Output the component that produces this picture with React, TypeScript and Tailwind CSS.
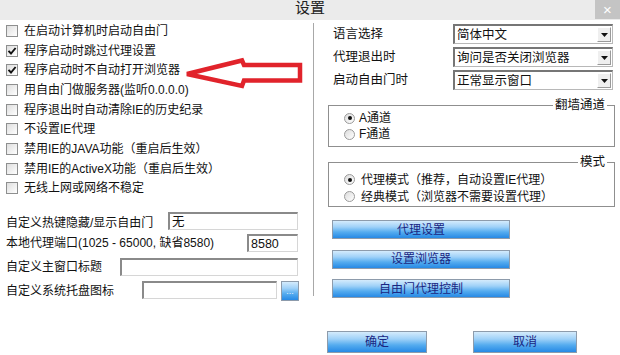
const checks = [
  { label: '在启动计算机时启动自由门', on: false },
  { label: '程序启动时跳过代理设置', on: true },
  { label: '程序启动时不自动打开浏览器', on: true },
  { label: '用自由门做服务器(监听0.0.0.0)', on: false },
  { label: '程序退出时自动清除IE的历史纪录', on: false },
  { label: '不设置IE代理', on: false },
  { label: '禁用IE的JAVA功能（重启后生效）', on: false },
  { label: '禁用IE的ActiveX功能（重启后生效）', on: false },
  { label: '无线上网或网络不稳定', on: false },
]

const selects = [
  { label: '语言选择', value: '简体中文' },
  { label: '代理退出时', value: '询问是否关闭浏览器' },
  { label: '启动自由门时', value: '正常显示窗口' },
]

const CheckBox = ({ on }: { on?: boolean }) => (
  <span className="w-[12px] h-[12px] shrink-0 border border-[#8e8f8f] bg-[linear-gradient(135deg,#dedede,#ffffff)] flex items-center justify-center">
    {on && (
      <svg width="10" height="10" viewBox="0 0 10 10">
        <path d="M1.5 4.8 L4 7.5 L8.6 2" fill="none" stroke="#111" strokeWidth="1.9" />
      </svg>
    )}
  </span>
)

const Radio = ({ on }: { on?: boolean }) => (
  <span className="w-[11px] h-[11px] shrink-0 rounded-full border border-[#9a9a9a] bg-[linear-gradient(135deg,#dcdcdc,#ffffff)] flex items-center justify-center">
    {on && <span className="w-[4px] h-[4px] rounded-full bg-[#111]" />}
  </span>
)

const Field = ({ className, children }: { className: string; children?: React.ReactNode }) => (
  <div
    className={`h-[18px] bg-white border-t-2 border-l-2 border-b border-r border-t-[#8a8a8a] border-l-[#8a8a8a] border-b-[#d6d6d6] border-r-[#d6d6d6] flex items-center pl-[2px] text-[12.5px] ${className}`}
  >
    {children}
  </div>
)

const BlueBtn = ({ className, children }: { className: string; children?: React.ReactNode }) => (
  <div
    className={`flex items-center justify-center border border-[#8d9bab] bg-[linear-gradient(to_bottom,#d4ebfc_0%,#9fd1f8_35%,#55acef_65%,#2689e5_100%)] text-[#1a2682] ${className}`}
  >
    {children}
  </div>
)

const Legend = ({ children }: { children: React.ReactNode }) => (
  <span className="absolute -top-[8px] right-[7px] bg-white px-[2px] text-[12.5px] leading-[14px]">{children}</span>
)

export default function App() {
  return (
    <div className="w-[620px] h-[355px] bg-white relative overflow-hidden text-[12px] leading-[14px] text-[#111] font-['Liberation_Sans','Noto_Sans_CJK_SC',sans-serif]">
      {/* title bar */}
      <div className="h-[20px] bg-[#ebebeb] flex justify-between items-start">
        <div className="w-[25px]" />
        <div className="text-[15px] leading-[15px] mt-0 text-[#222]">设置</div>
        <div className="w-[25px] h-[19px] bg-[#c4c4c4] text-white text-[15px] flex items-center justify-center">×</div>
      </div>

      <div className="flex">
        {/* left column */}
        <div className="w-[313px] pl-[6px] pr-[14px] pt-[1px]">
          {checks.map((c) => (
            <div key={c.label} className="h-[19.7px] flex items-center gap-[6px]">
              <CheckBox on={c.on} />
              <span>{c.label}</span>
            </div>
          ))}

          <div className="mt-[14px] h-[18px] flex items-center justify-between">
            <span className="pt-[3px]">自定义热键隐藏/显示自由门</span>
            <Field className="w-[130px] mr-[1px]">无</Field>
          </div>
          <div className="mt-[4px] h-[18px] flex items-center justify-between">
            <span>本地代理端口(1025 - 65000, 缺省8580)</span>
            <Field className="w-[51px] mr-[1px]">8580</Field>
          </div>
          <div className="mt-[6px] h-[18px] flex items-center justify-between">
            <span>自定义主窗口标题</span>
            <Field className="w-[178px] mr-[1px]" />
          </div>
          <div className="mt-[5px] h-[20px] flex items-start justify-between">
            <span className="pt-[3px]">自定义系统托盘图标</span>
            <div className="flex gap-[4px]">
              <Field className="w-[135px]" />
              <BlueBtn className="w-[18px] h-[20px] text-[9px] leading-[9px] text-[#e8f3ff]">...</BlueBtn>
            </div>
          </div>
        </div>

        <div className="w-px h-[273px] mt-[3px] bg-[#a8a8a8]" />

        {/* right column */}
        <div className="flex-1 pl-[14px] pr-[5px]">
          <div className="mt-[4px] flex flex-col gap-[3px]">
            {selects.map((s) => (
              <div key={s.label} className="h-[20px] pl-[5px] pr-[2px] flex items-center justify-between">
                <span className="text-[12.5px]">{s.label}</span>
                <div className="w-[160px] h-[20px] bg-white border-t-2 border-l-2 border-b border-r border-t-[#767676] border-l-[#767676] border-b-[#b8b8b8] border-r-[#b8b8b8] flex items-center pl-[2px] pr-[1px]">
                  <span className="flex-1 text-[12.5px]">{s.value}</span>
                  <span className="w-[14px] h-[15px] bg-[#efefef] border border-t-white border-l-white border-b-[#9a9a9a] border-r-[#9a9a9a] flex items-center justify-center">
                    <svg width="7" height="4" viewBox="0 0 7 4">
                      <path d="M0 0 H7 L3.5 4 Z" fill="#111" />
                    </svg>
                  </span>
                </div>
              </div>
            ))}
          </div>

          <div className="relative mt-[15px] h-[42px] border border-[#8f8f8f] pl-[15px] pt-[4px]">
            <Legend>翻墙通道</Legend>
            <div className="h-[16px] flex items-center gap-[4px]">
              <Radio on />
              <span>A通道</span>
            </div>
            <div className="h-[16px] flex items-center gap-[4px]">
              <Radio />
              <span>F通道</span>
            </div>
          </div>

          <div className="relative mt-[15px] h-[45px] border border-[#8f8f8f] pl-[15px] pt-[8px]">
            <Legend>模式</Legend>
            <div className="h-[17px] flex items-center gap-[6px]">
              <Radio on />
              <span>代理模式（推荐，自动设置IE代理）</span>
            </div>
            <div className="h-[17px] flex items-center gap-[6px]">
              <Radio />
              <span>经典模式（浏览器不需要设置代理）</span>
            </div>
          </div>

          <div className="mt-[13px] ml-[4px] flex flex-col gap-[10.5px]">
            <BlueBtn className="w-[178px] h-[19px]">代理设置</BlueBtn>
            <BlueBtn className="w-[178px] h-[19px]">设置浏览器</BlueBtn>
            <BlueBtn className="w-[178px] h-[19px]">自由门代理控制</BlueBtn>
          </div>
        </div>
      </div>

      <div className="mt-[30px] pl-[327px] flex gap-[46px]">
        <BlueBtn className="w-[100px] h-[22px]">确定</BlueBtn>
        <BlueBtn className="w-[104px] h-[22px]">取消</BlueBtn>
      </div>

      {/* red annotation arrow */}
      <svg className="absolute left-[180px] top-[50px]" width="130" height="45" viewBox="0 0 130 45">
        <path
          d="M7 24 L62 10.5 L64 15 L120 15 L120 30.5 L64 30.5 L62 36 Z"
          fill="none"
          stroke="#e1232b"
          strokeWidth="4.5"
          strokeLinejoin="miter"
        />
      </svg>
    </div>
  )
}
